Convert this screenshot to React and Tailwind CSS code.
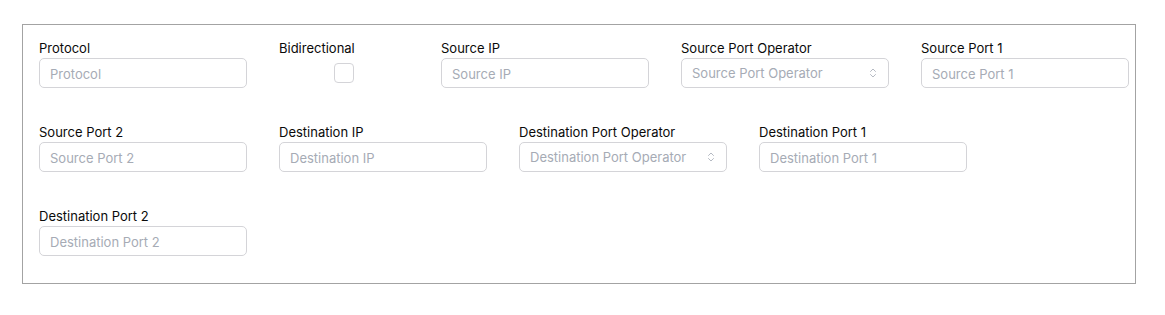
import React from "react";

const font = { fontFamily: "Inter, 'Noto Sans', sans-serif" };

function Chevrons() {
  return (
    <svg width="12" height="12" viewBox="0 0 24 24" fill="none" stroke="#9ca3af" strokeWidth="1.5" strokeLinecap="round" strokeLinejoin="round">
      <path d="m7 15 5 5 5-5" />
      <path d="m7 9 5-5 5 5" />
    </svg>
  );
}

function TextField({ label }) {
  return (
    <div className="flex w-[208px] flex-col">
      <label className="h-5 text-[13px] leading-5 text-[#0a0a0a]">{label}</label>
      <input
        placeholder={label}
        className="h-[30px] w-full rounded-[5px] border border-[#d4d4d8] bg-white px-[10px] pt-px text-[13px] text-[#0a0a0a] outline-none placeholder:text-[#a6abb5]"
      />
    </div>
  );
}

function SelectField({ label }) {
  return (
    <div className="flex w-[208px] flex-col">
      <label className="h-5 text-[13px] leading-5 text-[#0a0a0a]">{label}</label>
      <div className="flex h-[30px] w-full items-center justify-between rounded-[5px] border border-[#d4d4d8] bg-white pl-[10px] pr-[9px] text-[13px]">
        <span className="pt-[2px] text-[#a6abb5]">{label}</span>
        <Chevrons />
      </div>
    </div>
  );
}

function CheckField({ label }) {
  return (
    <div className="flex w-[130px] flex-col">
      <label className="h-5 text-[13px] leading-5 text-[#0a0a0a]">{label}</label>
      <div className="flex h-[30px] items-center justify-center">
        <div className="h-5 w-5 rounded-[4px] border border-[#d4d4d8] bg-white" />
      </div>
    </div>
  );
}

export default function App() {
  return (
    <div className="min-h-[315px] w-[1165px] bg-white pl-[22px] pt-[24px]" style={font}>
      <div className="w-[1114px] border border-[#a3a3a3] pb-[27px] pl-4 pr-1 pt-[13px]">
        <div className="flex flex-wrap gap-x-8 gap-y-[34px]">
          <TextField label="Protocol" />
          <CheckField label="Bidirectional" />
          <TextField label="Source IP" />
          <SelectField label="Source Port Operator" />
          <TextField label="Source Port 1" />
          <TextField label="Source Port 2" />
          <TextField label="Destination IP" />
          <SelectField label="Destination Port Operator" />
          <TextField label="Destination Port 1" />
          <TextField label="Destination Port 2" />
        </div>
      </div>
    </div>
  );
}
